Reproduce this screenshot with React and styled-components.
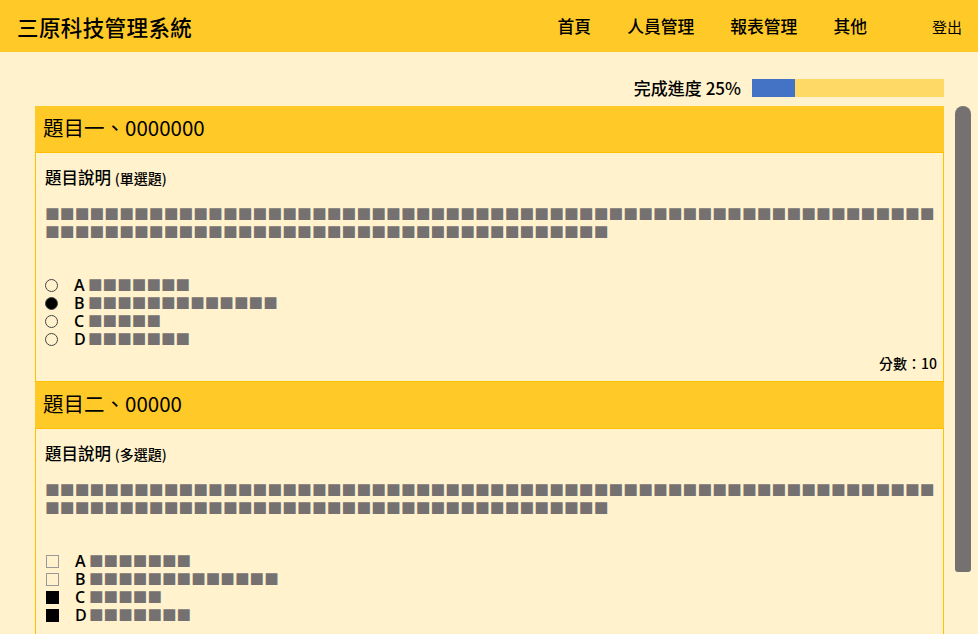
import React from "react";
import styled, { createGlobalStyle } from "styled-components";

const Global = createGlobalStyle`
  html, body { margin: 0; padding: 0; height: 634px; overflow: hidden; }
  body {
    background: #FFF2CC;
    font-family: "Noto Sans CJK TC", "Noto Sans", sans-serif;
    color: #000;
  }
`;

const Header = styled.header`
  height: 52px;
  background: #FFCA28;
  display: flex;
  align-items: center;
  padding: 0 16px 0 17px;
`;

const Brand = styled.div`
  font-size: 21.5px;
  font-weight: 500;
  letter-spacing: 0.4px;
  flex: 1;
`;

const Nav = styled.nav`
  display: flex;
  align-items: center;
  gap: 36px;
`;

const NavItem = styled.a`
  font-size: 16.8px;
  font-weight: 500;
  color: #000;
  text-decoration: none;
`;

const Logout = styled.a`
  margin-left: 65px;
  font-size: 15px;
  color: #000;
  text-decoration: none;
`;

const Main = styled.main`
  padding: 27px 0 0 35px;
`;

const ProgressRow = styled.div`
  width: 909px;
  display: flex;
  justify-content: flex-end;
  align-items: center;
  gap: 11px;
  height: 18px;
  margin-bottom: 9px;
`;

const ProgressLabel = styled.span`
  font-size: 17px;
  font-weight: 500;
  line-height: 18px;
`;

const Track = styled.div`
  width: 192px;
  height: 18px;
  background: #FFD966;
  display: flex;
`;

const Fill = styled.div`
  height: 100%;
  background: #4472C4;
`;

const Row = styled.div`
  display: flex;
  align-items: flex-start;
  gap: 11px;
`;

const Questions = styled.div`
  width: 909px;
  display: flex;
  flex-direction: column;
`;

const Scrollbar = styled.div`
  width: 16px;
  height: 466px;
  background: #767171;
  border-radius: 8px 8px 3px 3px;
  flex-shrink: 0;
`;

const QHeader = styled.div`
  height: 46px;
  background: #FFCA28;
  display: flex;
  align-items: center;
  padding: 0 0 5px 8px;
  box-sizing: border-box;
  font-size: 20.5px;
`;

const QBody = styled.div`
  border: 1px solid #FFC000;
  min-height: 230px;
  box-sizing: border-box;
  padding: 12px 6px 8px 9px;
  display: flex;
  flex-direction: column;
`;

const DescTitle = styled.div`
  font-size: 16.5px;
  line-height: 24px;
  font-weight: 500;
  small { font-size: 14px; }
`;

const Squares = styled.div`
  margin-top: 15px;
  font-family: "Noto Sans CJK TC", sans-serif;
  color: #767171;
  font-size: 14.83px;
  line-height: 18px;
  white-space: nowrap;
`;

const SquareLine = styled.div`
  height: 18px;
`;

const Options = styled.div`
  margin-top: 35px;
  display: flex;
  flex-direction: column;
`;

const Option = styled.div`
  display: flex;
  align-items: center;
  height: 18px;
`;

const Radio = styled.span`
  width: 11px;
  height: 11px;
  border-radius: 50%;
  border: 1px solid #444;
  background: ${(p) => (p.$on ? "#000" : "transparent")};
  margin-right: 16px;
  flex-shrink: 0;
`;

const Check = styled.span`
  width: 11px;
  height: 11px;
  border: 1px solid ${(p) => (p.$on ? "#000" : "#999")};
  background: ${(p) => (p.$on ? "#000" : "transparent")};
  margin-left: 1px;
  margin-right: 16px;
  flex-shrink: 0;
`;

const Letter = styled.span`
  display: inline-block;
  width: 14px;
  font-family: "Open Sans", "Noto Sans", sans-serif;
  font-weight: 600;
  font-size: 16px;
  line-height: 18px;
  letter-spacing: -0.5px;
  flex-shrink: 0;
`;

const OptText = styled.span`
  font-family: "Noto Sans CJK TC", sans-serif;
  color: #767171;
  font-size: 14.6px;
  line-height: 18px;
`;

const Score = styled.div`
  margin-top: ${(p) => p.$gap}px;
  text-align: right;
  font-size: 14px;
  font-weight: 500;
  line-height: 20px;
`;

const sq = (n) => "■".repeat(n);

const questions = [
  {
    title: "題目一、0000000",
    kind: "單選題",
    type: "radio",
    scoreGap: 5,
    options: [
      ["A", 7, false],
      ["B", 13, true],
      ["C", 5, false],
      ["D", 7, false],
    ],
  },
  {
    title: "題目二、00000",
    kind: "多選題",
    type: "check",
    scoreGap: 20,
    options: [
      ["A", 7, false],
      ["B", 13, false],
      ["C", 5, true],
      ["D", 7, true],
    ],
  },
];

function Question({ q }) {
  const Mark = q.type === "radio" ? Radio : Check;
  return (
    <>
      <QHeader>{q.title}</QHeader>
      <QBody>
        <DescTitle>
          題目說明 <small>({q.kind})</small>
        </DescTitle>
        <Squares>
          <SquareLine>{sq(60)}</SquareLine>
          <SquareLine>{sq(38)}</SquareLine>
        </Squares>
        <Options>
          {q.options.map(([l, n, on]) => (
            <Option key={l}>
              <Mark $on={on} />
              <Letter>{l}</Letter>
              <OptText>{sq(n)}</OptText>
            </Option>
          ))}
        </Options>
        <Score $gap={q.scoreGap}>分數：10</Score>
      </QBody>
    </>
  );
}

export default function App() {
  const pct = 22.4;
  return (
    <>
      <Global />
      <Header>
        <Brand>三原科技管理系統</Brand>
        <Nav>
          <NavItem>首頁</NavItem>
          <NavItem>人員管理</NavItem>
          <NavItem>報表管理</NavItem>
          <NavItem>其他</NavItem>
        </Nav>
        <Logout>登出</Logout>
      </Header>
      <Main>
        <ProgressRow>
          <ProgressLabel>完成進度 25%</ProgressLabel>
          <Track>
            <Fill style={{ width: `${pct}%` }} />
          </Track>
        </ProgressRow>
        <Row>
          <Questions>
            {questions.map((q) => (
              <Question key={q.title} q={q} />
            ))}
          </Questions>
          <Scrollbar />
        </Row>
      </Main>
    </>
  );
}
